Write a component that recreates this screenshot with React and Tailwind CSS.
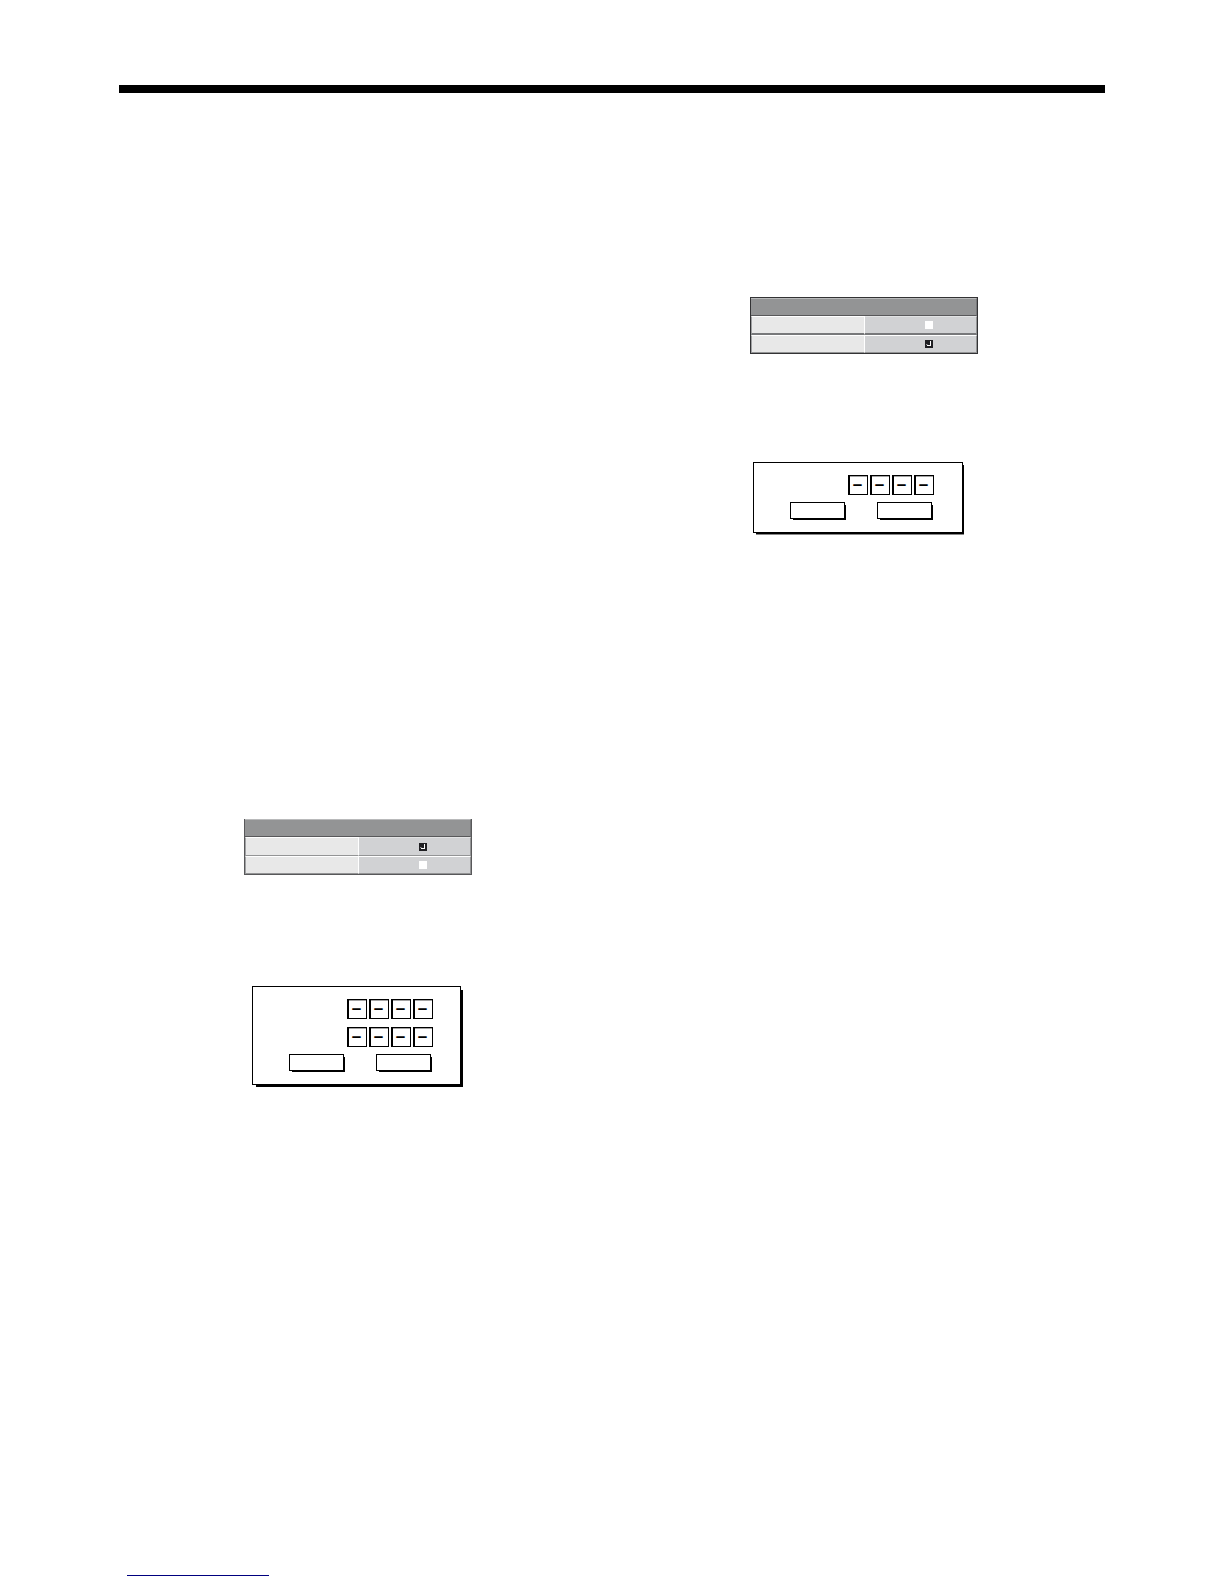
import clsx from 'clsx';

const OPTIONS = ['Disable', 'Enable'];

function OptionRadio({ name, label, checked }) {
  return (
    <label className="grid size-2">
      <input
        type="radio"
        name={name}
        aria-label={label}
        defaultChecked={checked}
        className="peer col-start-1 row-start-1 size-2 appearance-none bg-white checked:bg-[#1f1f22]"
      />
      <svg
        viewBox="0 0 8 8"
        className="pointer-events-none invisible col-start-1 row-start-1 size-2 peer-checked:visible"
        aria-hidden="true"
      >
        <path d="M5 1h1v5H2V5h-1V4.5h1.5V5H5z" fill="#fff" />
      </svg>
    </label>
  );
}

function OptionTable({ name, selected, framed, className }) {
  return (
    <table
      className={clsx(
        'w-[228px] table-fixed border-separate border-spacing-0 border-x border-b',
        framed ? 'border-t border-[#333335]' : 'border-[#58585a]',
        className
      )}
    >
      <colgroup>
        <col className="w-[114px]" />
        <col />
      </colgroup>
      <thead>
        <tr>
          <th
            colSpan={2}
            aria-label={name}
            className="h-[18px] border-t border-r border-b border-t-[#b9babb] border-r-[#77787a] border-b-[#58585a] bg-[#939495] p-0"
          ></th>
        </tr>
      </thead>
      <tbody>
        {OPTIONS.map((option, i) => (
          <tr key={option}>
            <td
              className={clsx(
                'border-t border-r border-l border-t-white border-r-white border-l-[#a0a1a3] bg-[#e8e8e8] p-0',
                i === 0 ? 'h-[19px]' : 'h-[18px]',
                i === 0 && framed ? 'border-b-2 border-b-[#77787a]' : 'border-b border-b-[#939495]'
              )}
            ></td>
            <td
              className={clsx(
                'border-t border-r border-r-[#939495] bg-[#d1d2d4] p-0 pl-[60px]',
                i === 0 ? 'border-t-[#e2e3e4]' : 'border-t-white',
                i === 0 && framed ? 'border-b-2 border-b-[#77787a]' : 'border-b border-b-[#939495]'
              )}
            >
              <OptionRadio name={name} label={option} checked={selected === option} />
            </td>
          </tr>
        ))}
      </tbody>
    </table>
  );
}

function PinRow({ label }) {
  return (
    <div role="group" aria-label={label} className="flex gap-0.5 pl-[94px]">
      {[1, 2, 3, 4].map((n) => (
        <input
          key={n}
          type="text"
          maxLength={1}
          defaultValue="–"
          aria-label={`${label} digit ${n}`}
          className="size-5 border border-l-2 border-black bg-white p-0 pr-0.5 text-center text-[17px] leading-4 font-bold text-black shadow-[inset_0_1px_0_0_#a3a3a3]"
        />
      ))}
    </div>
  );
}

function PinButton({ label }) {
  return (
    <button
      type="button"
      aria-label={label}
      className="h-[17px] w-[55px] border border-black bg-white shadow-[2px_2px_0_-1px_#000]"
    ></button>
  );
}

function PinDialog({ rows, className }) {
  return (
    <form className={clsx('border border-black bg-white pt-3 pb-[13px]', className)}>
      <div className="flex flex-col gap-2">
        {rows.map((row) => (
          <PinRow key={row} label={row} />
        ))}
      </div>
      <div className="mt-[7px] flex gap-8 pl-9">
        <PinButton label="OK" />
        <PinButton label="Cancel" />
      </div>
    </form>
  );
}

export default function App() {
  return (
    <div className="flex min-h-screen flex-col bg-white px-[119px] pt-[85px] pb-2 font-['Liberation_Sans',sans-serif]">
      <header className="h-2 bg-black"></header>

      <main className="grid grid-cols-2">
        {/* Setting the password */}
        <section className="pt-[726px] pl-[125px]">
          <OptionTable name="Set password" selected="Disable" />
          <PinDialog
            rows={['Password', 'Reconfirm']}
            className="mt-[111px] ml-2 w-[209px] shadow-[3px_3px_0_-1px_#000]"
          />
        </section>

        {/* Clearing the password */}
        <section className="pt-[204px] pl-[138px]">
          <OptionTable name="Clear password" selected="Enable" framed />
          <PinDialog
            rows={['Current password']}
            className="mt-[108px] ml-[3px] w-[210px] shadow-[2px_2px_0_-1px_#000,2px_3px_0_-1px_#888]"
          />
        </section>
      </main>

      <footer className="mt-auto pl-2">
        <a href="#top" aria-label="Back to top" className="block w-[142px] border-b border-[#00007f]"></a>
      </footer>
    </div>
  );
}
